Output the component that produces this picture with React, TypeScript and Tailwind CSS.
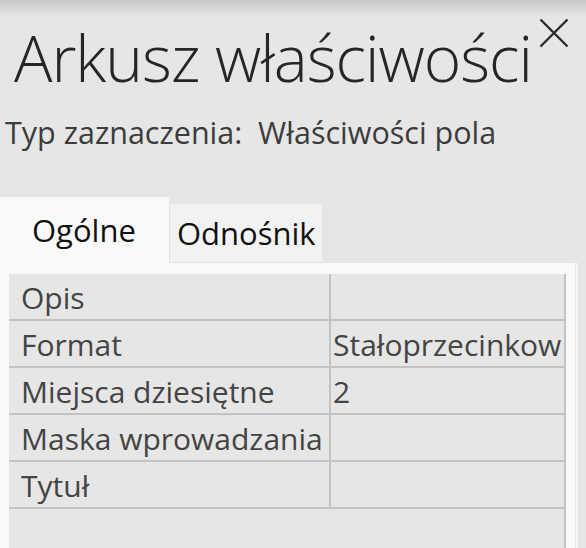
import React from "react";

// ─── Data ─────────────────────────────────────────────────────────────────────

const ROWS: [string, string][] = [
  ["Opis", ""],
  ["Format", "Stałoprzecinkow"],
  ["Miejsca dziesiętne", "2"],
  ["Maska wprowadzania", ""],
  ["Tytuł", ""],
];

const FONT = "font-['Segoe_UI','Open_Sans','Noto_Sans',sans-serif]";

// ─── Pieces ───────────────────────────────────────────────────────────────────

function CloseIcon() {
  return (
    <svg width="32" height="32" viewBox="0 0 32 32" className="text-[#2b2b2b]">
      <path d="M2.5 2.5 L29.5 29.5 M29.5 2.5 L2.5 29.5" stroke="currentColor" strokeWidth="2.4" fill="none" />
    </svg>
  );
}

function PropertyRow({ label, value }: { label: string; value: string }) {
  return (
    <div className="flex h-[47px] border-b-2 border-[#c3c3c3]">
      <div className="w-[322px] flex-shrink-0 pl-3 pt-[7px] border-r-2 border-[#c3c3c3] overflow-hidden whitespace-nowrap">
        {label}
      </div>
      <div className="flex-1 min-w-0 pl-[2px] pt-[7px] overflow-hidden whitespace-nowrap">{value}</div>
    </div>
  );
}

// ─── App ──────────────────────────────────────────────────────────────────────

export default function App() {
  return (
    <div className={`relative w-[586px] h-[548px] bg-[#e6e6e6] overflow-hidden flex flex-col ${FONT}`}>
      {/* Top shadow */}
      <div className="absolute top-0 left-0 right-0 h-4 bg-gradient-to-b from-[#c6c6c6] to-[#e6e6e6]" />

      {/* Header */}
      <div className="relative flex items-start justify-between pl-[14px] pr-[16px] pt-[20px]">
        <h1 className="text-[64px] leading-[76px] font-light text-[#262626] tracking-[-1px] whitespace-nowrap">
          Arkusz właściwości
        </h1>
        <div className="-mt-[3px]">
          <CloseIcon />
        </div>
      </div>
      <p className="pl-[5px] mt-[16px] text-[30.5px] leading-[40px] text-[#3c3c3c] whitespace-nowrap">
        Typ zaznaczenia:&nbsp; Właściwości pola
      </p>

      {/* Tabs */}
      <div className="flex items-end mt-[45px] h-[66px]">
        <div className="w-[169px] h-[66px] bg-[#f9f9f9] pl-[32px] pt-[13px] text-[31px] leading-[40px] text-[#111]">
          Ogólne
        </div>
        <div className="w-[153px] h-[59px] bg-[#f2f2f2] border-l border-b border-[#e2e2e2] pl-[7px] pt-[9px] text-[31px] leading-[40px] text-[#111]">
          Odnośnik
        </div>
      </div>

      {/* Panel */}
      <div className="flex flex-1 min-h-0">
        <div className="w-[575px] bg-[#f9f9f9] pl-[9px] pt-[11px] pr-[9px]">
          <div className="h-full bg-[#e6e6e6] border-r-2 border-[#c3c3c3] text-[30px] leading-[34px] text-[#444]">
            {ROWS.map(([label, value]) => (
              <PropertyRow key={label} label={label} value={value} />
            ))}
          </div>
        </div>
        <div className="w-px" />
        <div className="w-[2px] bg-[#f6f6f6]" />
      </div>
    </div>
  );
}
